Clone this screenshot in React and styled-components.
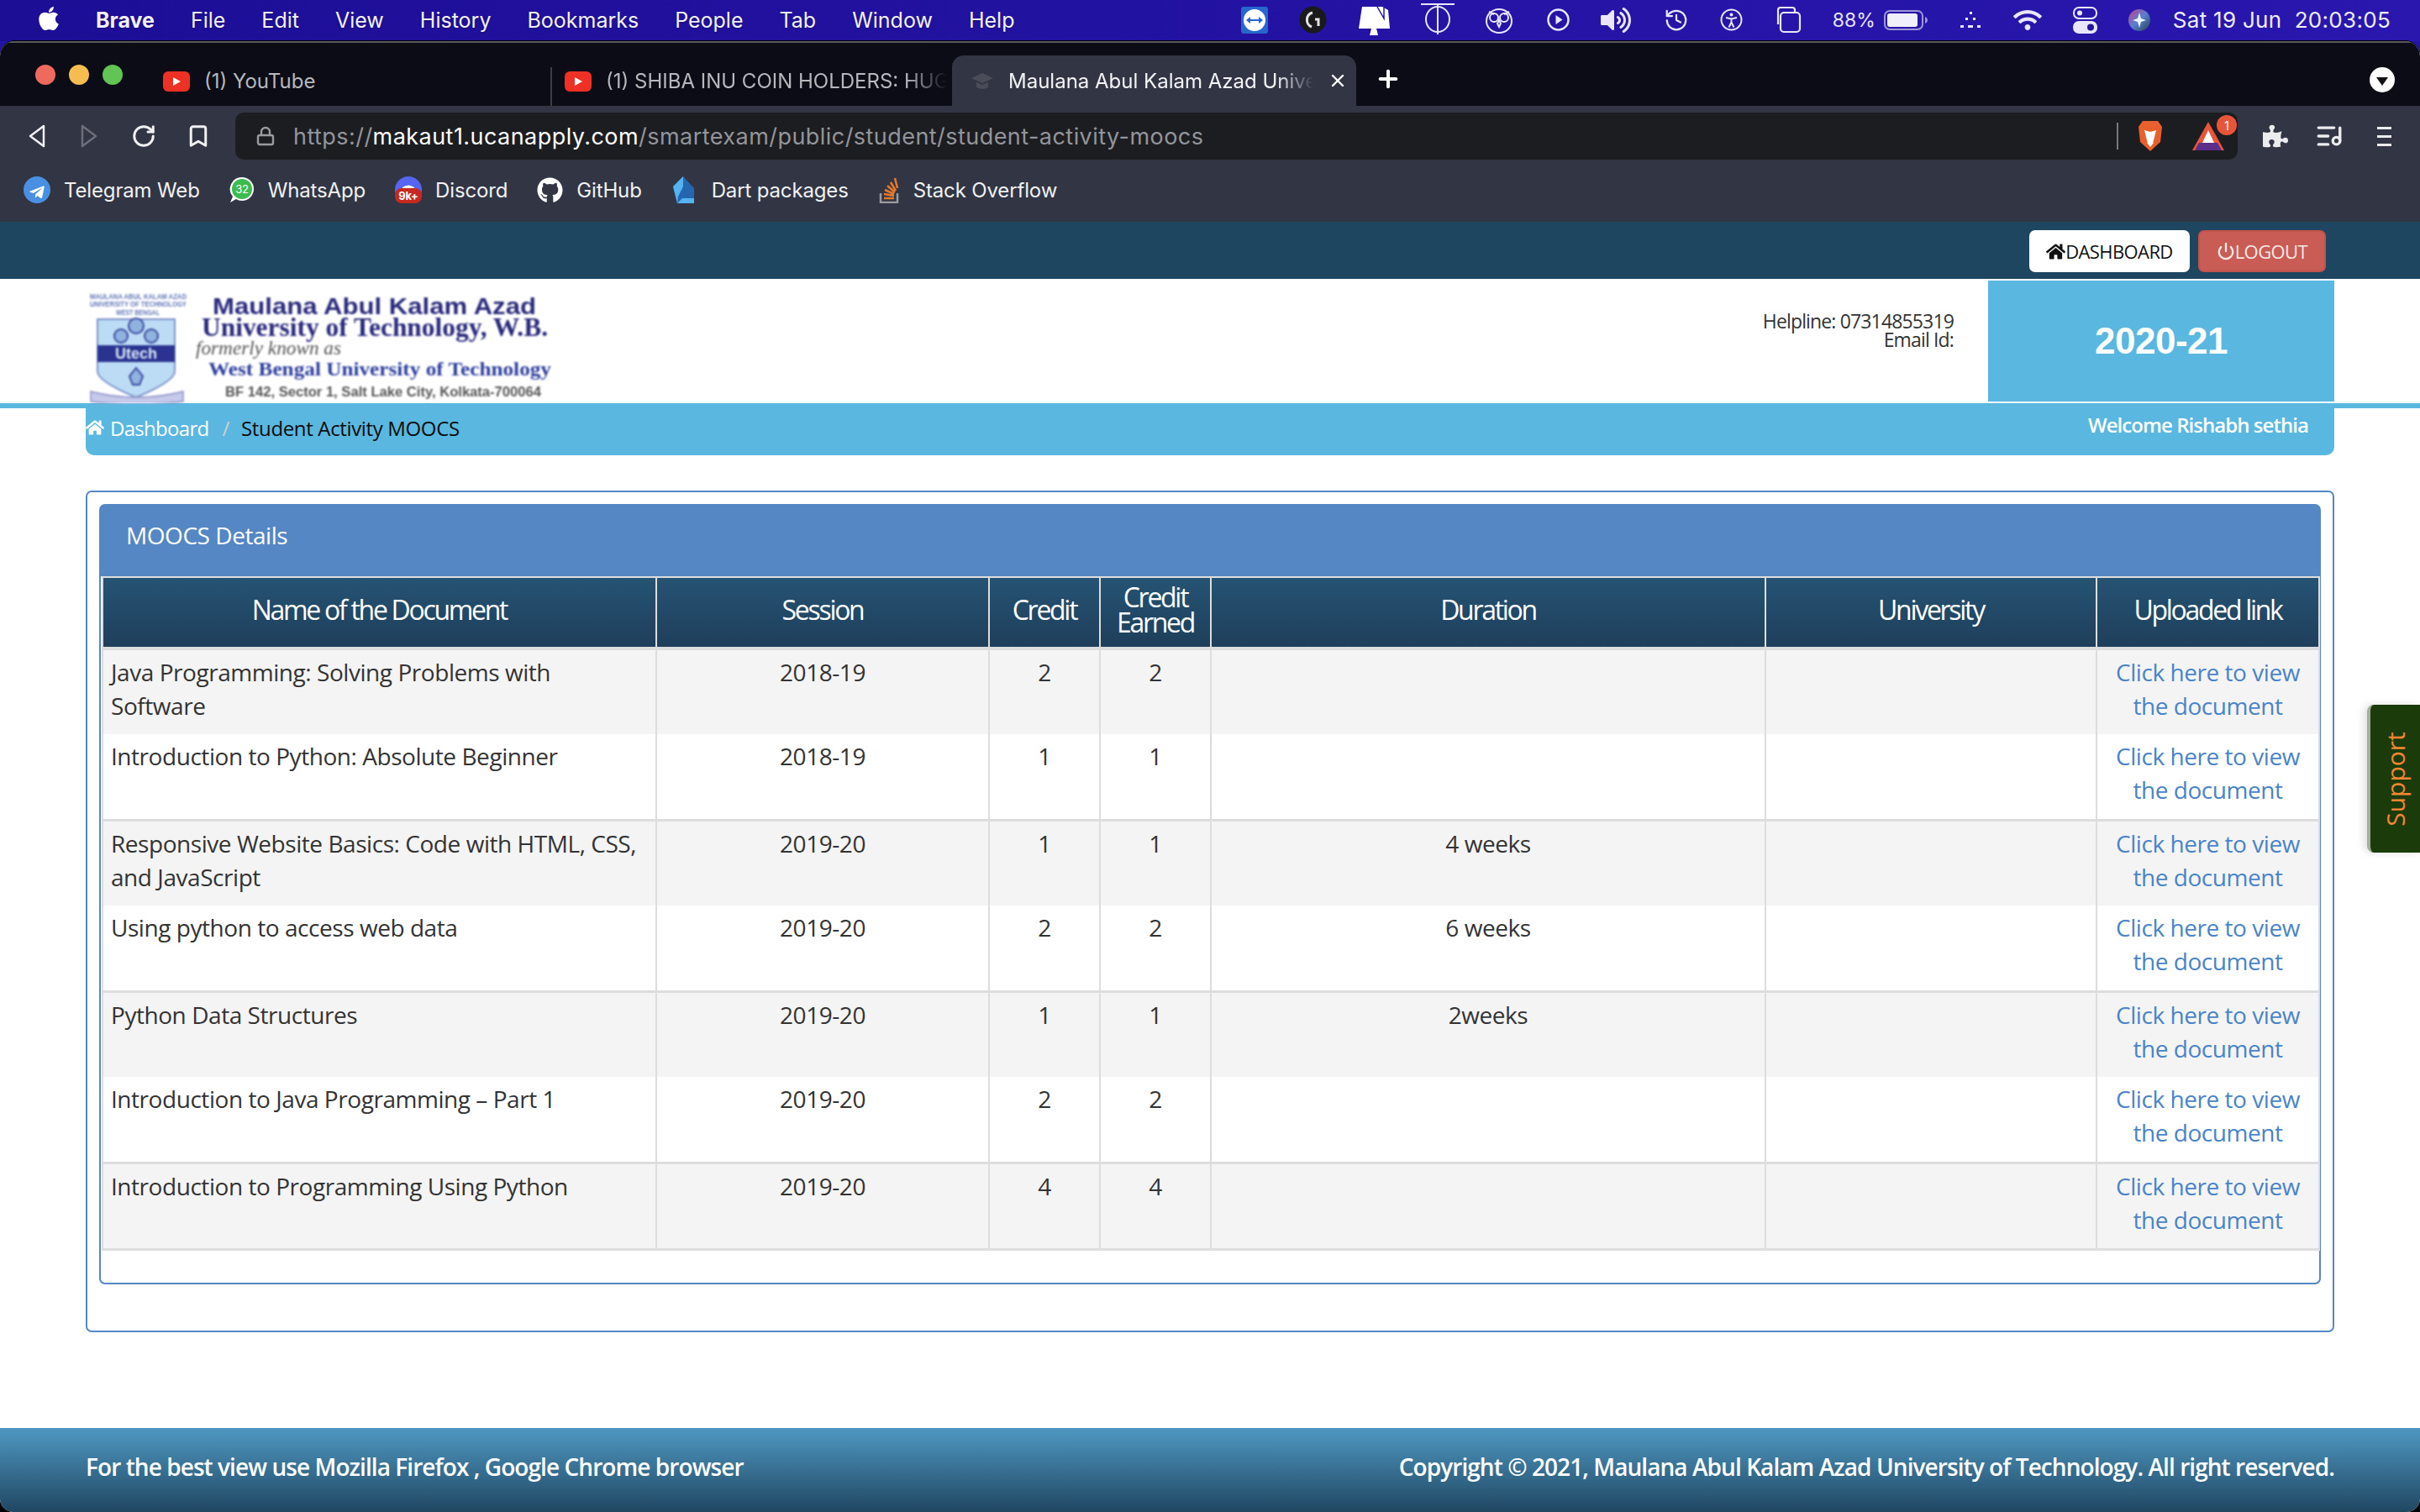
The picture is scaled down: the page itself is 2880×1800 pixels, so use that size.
import React from "react";
import styled, { createGlobalStyle } from "styled-components";
import { FaApple, FaGithub, FaTelegramPlane, FaHome, FaPuzzlePiece, FaVolumeUp, FaWifi } from "react-icons/fa";
import { Power, History, ListMusic, RotateCw, Bookmark, Plus, X, Lock } from "lucide-react";

const GlobalStyle = createGlobalStyle`
  html, body { margin: 0; padding: 0; background: #000; }
  * { box-sizing: border-box; }
  body { font-family: "Open Sans", "Liberation Sans", sans-serif; }
`;

const Screen = styled.div`
  width: 2880px;
  height: 1800px;
  overflow: hidden;
  display: flex;
  flex-direction: column;
  background: linear-gradient(#2414a6 0, #2414a6 70px, #000 70px);
`;

/* ---- mac menu bar ---- */
const MenuBar = styled.div`
  height: 49px;
  flex: none;
  display: flex;
  align-items: center;
  justify-content: space-between;
  padding: 0 35px 2px 42px;
  background: linear-gradient(90deg, #1d0e96, #2917ae);
  color: #fff;
  font-family: Inter, "Liberation Sans", sans-serif;
  font-size: 25px;
`;
const MenuLeft = styled.div`
  display: flex;
  align-items: center;
  gap: 43px;
`;
const AppleMark = styled.span`
  display: flex;
  font-size: 32px;
  margin: -4px -3px 0 0;
`;
const MenuItem = styled.span`
  font-weight: ${(p) => (p.$bold ? 700 : 400)};
  color: #f2f1fb;
  text-shadow: 0 1px 2px rgba(0, 0, 0, 0.3);
`;
const StatusIcons = styled.div`
  display: flex;
  align-items: center;
  gap: 37px;
  color: #e8e6f8;
`;
const StatusIcon = styled.svg`
  display: block;
  flex: none;
  margin-left: ${(p) => p.$shift || 0}px;
`;
const BatteryGroup = styled.div`
  display: flex;
  align-items: center;
  gap: 10px;
  font-size: 23px;
`;
const Clock = styled.span`
  font-size: 26px;
  margin-left: -10px;
  letter-spacing: 0.3px;
  color: #eeedfa;
  white-space: pre;
`;

/* ---- browser chrome ---- */
const BrowserWindow = styled.div`
  flex: 1;
  display: flex;
  flex-direction: column;
  border-radius: 18px 18px 16px 16px;
  overflow: hidden;
  background: #fff;
  box-shadow: 0 -1px 0 #000;
`;
const TabStrip = styled.div`
  height: 77px;
  flex: none;
  display: flex;
  align-items: flex-end;
  background: #0b0c15;
  border-top: 2px solid #5a5a5e;
  font-family: Inter, "Liberation Sans", sans-serif;
  font-size: 24px;
`;
const Lights = styled.div`
  width: 170px;
  height: 75px;
  flex: none;
  display: flex;
  align-items: center;
  gap: 16px;
  padding: 0 0 0 42px;
`;
const Light = styled.span`
  width: 24px;
  height: 24px;
  border-radius: 50%;
  background: ${(p) => p.$color};
`;
const Tab = styled.div`
  width: ${(p) => p.$width}px;
  height: ${(p) => (p.$active ? 60 : 46)}px;
  flex: none;
  display: flex;
  align-items: center;
  gap: 17px;
  padding: ${(p) => (p.$active ? "0 12px 0 22px" : `0 6px 13px ${p.$inset}px`)};
  color: ${(p) => (p.$active ? "#f4f4f6" : "#b7b8bd")};
  background: ${(p) => (p.$active ? "#323644" : "transparent")};
  border-radius: ${(p) => (p.$active ? "14px 14px 0 0" : "0")};
  border-right: ${(p) => (p.$divider ? "2px solid #3c3d45" : "none")};
`;
const TabTitle = styled.span`
  flex: 1;
  white-space: nowrap;
  overflow: hidden;
  -webkit-mask-image: ${(p) => (p.$fade ? "linear-gradient(90deg, #000 88%, transparent)" : "none")};
`;
const TabClose = styled.span`
  display: flex;
  color: #fff;
  margin-right: -2px;
`;
const NewTab = styled.span`
  display: flex;
  color: #fff;
  margin: 0 0 10px 22px;
  height: 44px;
  align-items: center;
`;
const TabMenu = styled.span`
  margin: 0 30px 16px auto;
  width: 30px;
  height: 30px;
  border-radius: 50%;
  background: #fff;
  display: flex;
  align-items: center;
  justify-content: center;
  &::after {
    content: "";
    margin-top: 3px;
    border-left: 7px solid transparent;
    border-right: 7px solid transparent;
    border-top: 10px solid #111;
  }
`;
const Toolbar = styled.div`
  height: 72px;
  flex: none;
  display: flex;
  align-items: center;
  padding: 8px 0 8px 0;
  background: #323644;
  font-family: Inter, "Liberation Sans", sans-serif;
`;
const NavButtons = styled.div`
  width: 280px;
  flex: none;
  display: flex;
  align-items: center;
  gap: 40px;
  padding-left: 33px;
  color: #f1f1f3;
`;
const UrlBar = styled.div`
  width: 2383px;
  height: 56px;
  flex: none;
  display: flex;
  align-items: center;
  padding: 0 16px 0 24px;
  background: #1c1d21;
  border-radius: 10px;
  font-size: 27px;
  color: #94959a;
`;
const UrlText = styled.span`
  flex: 1;
  margin-left: 21px;
  white-space: nowrap;
  letter-spacing: 0.45px;
`;
const UrlHost = styled.span`
  color: #fff;
`;
const UrlDivider = styled.span`
  width: 2px;
  height: 32px;
  background: #77787c;
  margin-right: 22px;
`;
const RewardsBadge = styled.span`
  position: relative;
  display: flex;
  margin-left: 34px;
`;
const CountBubble = styled.span`
  position: absolute;
  top: -8px;
  right: -15px;
  width: 24px;
  height: 24px;
  border-radius: 12px;
  background: #e8553a;
  color: #fff;
  font-size: 14px;
  display: flex;
  align-items: center;
  justify-content: center;
`;
const ExtensionIcons = styled.div`
  flex: 1;
  display: flex;
  align-items: center;
  gap: 32px;
  padding-left: 30px;
  color: #ececee;
`;
const KebabIcon = styled.span`
  display: flex;
  flex-direction: column;
  gap: 7px;
  margin-left: 8px;
  & > i {
    width: 17px;
    height: 3px;
    background: #ececee;
  }
`;
const BookmarkBar = styled.div`
  height: 66px;
  flex: none;
  display: flex;
  align-items: center;
  gap: 35px;
  padding: 0 0 10px 28px;
  background: #323644;
  color: #f1f1f3;
  font-family: Inter, "Liberation Sans", sans-serif;
  font-size: 24px;
  letter-spacing: -0.15px;
`;
const BookmarkItem = styled.div`
  display: flex;
  align-items: center;
  gap: 16px;
  white-space: nowrap;
`;

/* ---- site header ---- */
const TopNav = styled.div`
  height: 68px;
  flex: none;
  display: flex;
  align-items: center;
  justify-content: flex-end;
  gap: 10px;
  padding: 2px 112px 0 0;
  background: #1f4661;
`;
const NavButton = styled.div`
  height: 50px;
  display: flex;
  align-items: center;
  padding: 0 20px;
  border-radius: 7px;
  font-size: 22px;
  letter-spacing: -0.6px;
  background: ${(p) => (p.$danger ? "#c95c55" : "#fff")};
  color: ${(p) => (p.$danger ? "#f7e8e6" : "#111")};
  border: ${(p) => (p.$danger ? "2px solid #c4524c" : "none")};
`;
const BrandRow = styled.div`
  height: 148px;
  flex: none;
  display: flex;
  align-items: stretch;
  padding: 2px 102px;
  background: #fff;
`;
const LogoImage = styled.svg`
  display: block;
  margin-top: 16px;
  flex: none;
  filter: blur(0.9px);
`;
const Contact = styled.div`
  margin: 37px 41px 0 auto;
  text-align: right;
  font-size: 23px;
  line-height: 22px;
  color: #333;
  letter-spacing: -0.85px;
`;
const YearBox = styled.div`
  width: 412px;
  display: flex;
  align-items: center;
  justify-content: center;
  background: #5ab7df;
  color: #fff;
  font-family: "Liberation Sans", Arial, sans-serif;
  font-weight: 700;
  font-size: 44px;
  letter-spacing: -0.5px;
`;
const BlueRule = styled.div`
  height: 6px;
  flex: none;
  background: #5ab7df;
  box-shadow: 0 4px 6px rgba(0, 0, 0, 0.22);
`;
const Content = styled.div`
  flex: 1;
  display: flex;
  flex-direction: column;
  padding: 0 102px;
  background: #fff;
  position: relative;
`;
const BreadcrumbBar = styled.div`
  height: 56px;
  flex: none;
  display: flex;
  align-items: flex-start;
  justify-content: space-between;
  padding: 0 31px 0 0;
  margin-bottom: 42px;
  background: #5ab7df;
  border-radius: 0 0 10px 10px;
  position: relative;
  font-size: 24px;
`;
const Crumbs = styled.div`
  display: flex;
  align-items: center;
  height: 46px;
  letter-spacing: -0.35px;
`;
const CrumbLink = styled.span`
  display: flex;
  align-items: center;
  gap: 7px;
  color: #fff;
  letter-spacing: -0.7px;
`;
const CrumbSep = styled.span`
  margin: 0 14px 0 16px;
  color: #d0d0d0;
`;
const CrumbCurrent = styled.span`
  color: #0c0c0c;
`;
const Welcome = styled.div`
  height: 38px;
  display: flex;
  align-items: center;
  color: #fff;
  font-weight: 600;
  letter-spacing: -0.95px;
`;
const OuterBox = styled.div`
  height: 1002px;
  flex: none;
  padding: 14px;
  border: 2px solid #5487c4;
  border-radius: 7px;
`;
const Panel = styled.div`
  height: 929px;
  border: 2px solid #5487c4;
  border-radius: 7px;
`;
const PanelHeading = styled.div`
  height: 84px;
  padding: 15px 30px 0;
  background: #5487c4;
  color: #fff;
  font-size: 28px;
  line-height: 40px;
  letter-spacing: -0.45px;
`;
const Table = styled.table`
  width: 2638px;
  margin-left: 1px;
  border-collapse: collapse;
  table-layout: fixed;
  font-size: 28px;
  line-height: 40px;
  color: #333;
`;
const HeadCell = styled.th`
  height: 85px;
  padding: 0 6px 7px;
  font-size: 32px;
  line-height: 30px;
  font-weight: 500;
  letter-spacing: -2.3px;
  color: #fff;
  text-align: center;
  background: linear-gradient(#265373, #1e3f5b);
  border: 2px solid #ddd;
  border-bottom: 4px solid #ddd;
`;
const Row = styled.tr`
  height: 102px;
  background: ${(p) => (p.$striped ? "#f4f4f4" : "#fff")};
  border-bottom: ${(p) => (p.$striped && !p.$last ? "none" : "3px solid #ddd")};
`;
const Cell = styled.td`
  padding: 6px 9px 14px;
  vertical-align: top;
  border-left: 2px solid #ddd;
  border-right: 2px solid #ddd;
  text-align: ${(p) => (p.$left ? "left" : "center")};
  letter-spacing: -0.45px;
`;
const DocLink = styled.a`
  color: #4a84c8;
`;
const SupportTab = styled.div`
  position: absolute;
  top: 353px;
  right: 0;
  width: 63px;
  height: 176px;
  display: flex;
  align-items: center;
  justify-content: center;
  background: #1c3b0b;
  border-left: 4px solid #a3b09b;
  border-radius: 8px 0 0 8px;
  box-shadow: -4px 0 10px rgba(0, 0, 0, 0.12);
  color: #f58632;
  font-size: 30px;
  & > span {
    display: block;
    transform: rotate(-90deg);
  }
`;
const Footer = styled.div`
  height: 100px;
  flex: none;
  display: flex;
  align-items: center;
  justify-content: space-between;
  padding: 0 102px 8px;
  background: linear-gradient(#4f98c2, #204762);
  color: #fff;
  font-size: 28px;
  font-weight: 600;
  letter-spacing: -0.93px;
`;

const menuItems = ["File", "Edit", "View", "History", "Bookmarks", "People", "Tab", "Window", "Help"];

const columns = [
  { label: "Name of the Document", width: 659 },
  { label: "Session", width: 396 },
  { label: "Credit", width: 132 },
  { label: "Credit Earned", width: 132 },
  { label: "Duration", width: 660 },
  { label: "University", width: 394 },
  { label: "Uploaded link", width: 265 },
];

const documents = [
  { name: "Java Programming: Solving Problems with Software", session: "2018-19", credit: 2, duration: "" },
  { name: "Introduction to Python: Absolute Beginner", session: "2018-19", credit: 1, duration: "" },
  { name: "Responsive Website Basics: Code with HTML, CSS, and JavaScript", session: "2019-20", credit: 1, duration: "4 weeks" },
  { name: "Using python to access web data", session: "2019-20", credit: 2, duration: "6 weeks" },
  { name: "Python Data Structures", session: "2019-20", credit: 1, duration: "2weeks" },
  { name: "Introduction to Java Programming – Part 1", session: "2019-20", credit: 2, duration: "" },
  { name: "Introduction to Programming Using Python", session: "2019-20", credit: 4, duration: "" },
];

const YoutubeFavicon = () => (
  <svg width="32" height="24" viewBox="0 0 32 24" style={{ flex: "none" }}>
    <rect width="32" height="24" rx="6" fill="#ee3124" />
    <path d="M12 7l9 5-9 5z" fill="#fff" />
  </svg>
);

const StatusBar = () => (
  <StatusIcons>
    <StatusIcon width="32" height="32" viewBox="0 0 32 32">
      <rect width="32" height="32" rx="3" fill="#2766cc" />
      <circle cx="16" cy="16" r="13" fill="#fff" />
      <path d="M6 16l5-4v3h10v-3l5 4-5 4v-3H11v3z" fill="#2766cc" />
    </StatusIcon>
    <StatusIcon width="33" height="33" viewBox="0 0 33 33">
      <circle cx="16.5" cy="16.5" r="16" fill="#1a1a1c" />
      <path d="M16 8a9 9 0 0 0-1 17M19 16h4v8" fill="none" stroke="#e2e2e2" strokeWidth="3" />
    </StatusIcon>
    <StatusIcon width="38" height="36" viewBox="0 0 38 36">
      <path d="M5 2h24l7 4 2 22H1z" fill="#fff" />
      <path d="M23 2l8 14V3" fill="none" stroke="#2414a6" strokeWidth="1.5" />
      <path d="M16 28h6l2 8H14z" fill="#fff" />
    </StatusIcon>
    <StatusIcon width="40" height="38" viewBox="0 0 40 38" style={{ marginTop: -4 }}>
      <g fill="none" stroke="currentColor" strokeWidth="2">
        <path d="M0 2h40M20 2v36" />
        <ellipse cx="20" cy="20" rx="14" ry="15" />
      </g>
    </StatusIcon>
    <StatusIcon width="32" height="32" viewBox="0 0 32 32" fill="none" stroke="currentColor" strokeWidth="2">
      <ellipse cx="16" cy="17" rx="15" ry="14" />
      <circle cx="10" cy="13" r="5" />
      <circle cx="22" cy="13" r="5" />
      <path d="M16 16l-2 4 2 4 2-4zM4 6l6 3M28 6l-6 3" />
    </StatusIcon>
    <StatusIcon $shift={4} width="27" height="27" viewBox="0 0 27 27">
      <circle cx="13.5" cy="13.5" r="12" fill="none" stroke="currentColor" strokeWidth="2.5" />
      <path d="M10.5 8l8 5.5-8 5.5z" fill="currentColor" />
    </StatusIcon>
    <FaVolumeUp size={36} />
    <History size={30} strokeWidth={1.8} style={{ marginLeft: 2 }} />
    <StatusIcon width="27" height="27" viewBox="0 0 27 27" fill="none" stroke="currentColor" strokeWidth="2">
      <circle cx="13.5" cy="13.5" r="12" />
      <circle cx="13.5" cy="7.5" r="1" />
      <path d="M7 11l6.5 1.5L20 11M13.5 12.5v4l-3 6M13.5 16.5l3 6" />
    </StatusIcon>
    <StatusIcon width="33" height="33" viewBox="0 0 33 33" fill="none" stroke="currentColor" strokeWidth="2.2">
      <path d="M5 22V5a3 3 0 0 1 3-3h14a3 3 0 0 1 3 3v2" />
      <rect x="8" y="8" width="23" height="23" rx="4" />
    </StatusIcon>
    <BatteryGroup>
      <span>88%</span>
      <StatusIcon width="52" height="24" viewBox="0 0 52 24">
        <rect x="1" y="1" width="45" height="22" rx="6" fill="none" stroke="#9d97d9" strokeWidth="2" />
        <rect x="4" y="4" width="36" height="16" rx="3" fill="#f0effa" />
        <path d="M49 8c2 1 3 2.5 3 4s-1 3-3 4z" fill="#9d97d9" />
      </StatusIcon>
    </BatteryGroup>
    <StatusIcon width="28" height="20" viewBox="0 0 28 20" fill="currentColor">
      <rect x="13" y="0" width="3" height="3" />
      <rect x="8" y="7" width="3" height="3" />
      <rect x="17" y="7" width="3" height="3" />
      <rect x="2" y="16" width="4" height="3" />
      <rect x="11" y="16" width="6" height="3" />
      <rect x="22" y="16" width="4" height="3" />
    </StatusIcon>
    <FaWifi size={34} />
    <StatusIcon width="29" height="32" viewBox="0 0 29 32">
      <rect x="1" y="1" width="27" height="13" rx="6" fill="none" stroke="currentColor" strokeWidth="2" />
      <circle cx="8" cy="7.5" r="3" fill="currentColor" />
      <rect y="17" width="29" height="15" rx="7" fill="currentColor" />
      <circle cx="21" cy="24.5" r="4" fill="#2414a6" />
    </StatusIcon>
    <StatusIcon width="26" height="26" viewBox="0 0 26 26">
      <defs>
        <linearGradient id="siri" x1="0" y1="0" x2="1" y2="1">
          <stop offset="0" stopColor="#c0408c" />
          <stop offset="0.5" stopColor="#5a7fd0" />
          <stop offset="1" stopColor="#23404a" />
        </linearGradient>
      </defs>
      <circle cx="13" cy="13" r="13" fill="url(#siri)" />
      <path d="M13 4l2 7 6 2-6 2-2 7-2-7-6-2 6-2z" fill="#e8f6ff" />
    </StatusIcon>
    <Clock>{"Sat 19 Jun  20:03:05"}</Clock>
  </StatusIcons>
);

const Logo = () => (
  <LogoImage width="570" height="130" viewBox="0 0 570 130">
    <g fontFamily="Liberation Sans, sans-serif" fontSize="9" fontWeight="700" fill="#6377b8">
      <text x="5" y="6" textLength="115" lengthAdjust="spacingAndGlyphs">MAULANA ABUL KALAM AZAD</text>
      <text x="5" y="15" textLength="115" lengthAdjust="spacingAndGlyphs">UNIVERSITY OF TECHNOLOGY</text>
      <text x="36" y="25" textLength="52" lengthAdjust="spacingAndGlyphs">WEST BENGAL</text>
    </g>
    <path d="M14 30h92v62q0 12-46 31q-46-19-46-31z" fill="#bcdcf5" stroke="#7f92cc" strokeWidth="2" />
    <rect x="14" y="61" width="92" height="20" fill="#2a3490" />
    <text x="60" y="77" textAnchor="middle" fontFamily="Liberation Sans, sans-serif" fontSize="18" fontWeight="700" fill="#d8e6f8">Utech</text>
    <g fill="#8fb2de" stroke="#3a4aa0" strokeWidth="2">
      <circle cx="60" cy="38" r="9" />
      <circle cx="42" cy="50" r="8" />
      <circle cx="78" cy="50" r="8" />
    </g>
    <path d="M60 88l8 10-4 10h-8l-4-10z" fill="#8fb2de" stroke="#3a4aa0" strokeWidth="2" />
    <path d="M6 116q54 14 110 0v12q-56 6-110 0z" fill="#c6c9ea" stroke="#8d92c8" strokeWidth="1.5" />
    <g fontFamily="Liberation Serif, serif" fontWeight="700" fontSize="31" fill="#2a2a7c">
      <text x="151" y="24" textLength="385" lengthAdjust="spacingAndGlyphs" fontFamily="Liberation Sans, sans-serif" fontSize="27">Maulana Abul Kalam Azad</text>
      <text x="138" y="50" textLength="412" lengthAdjust="spacingAndGlyphs">University of Technology, W.B.</text>
    </g>
    <text x="131" y="72" textLength="173" lengthAdjust="spacingAndGlyphs" fontFamily="Liberation Serif, serif" fontStyle="italic" fontSize="24" fill="#555">formerly known as</text>
    <text x="146" y="97" textLength="408" lengthAdjust="spacingAndGlyphs" fontFamily="Liberation Serif, serif" fontWeight="700" fontSize="24" fill="#2e3f9c">West Bengal University of Technology</text>
    <text x="166" y="122" textLength="376" lengthAdjust="spacingAndGlyphs" fontFamily="Liberation Sans, sans-serif" fontWeight="700" fontSize="16" fill="#555">BF 142, Sector 1, Salt Lake City, Kolkata-700064</text>
  </LogoImage>
);

export default function App() {
  return (
    <Screen>
      <GlobalStyle />
      <MenuBar>
        <MenuLeft>
          <AppleMark><FaApple /></AppleMark>
          <MenuItem $bold>Brave</MenuItem>
          {menuItems.map((item) => <MenuItem key={item}>{item}</MenuItem>)}
        </MenuLeft>
        <StatusBar />
      </MenuBar>

      <BrowserWindow>
        <TabStrip>
          <Lights>
            <Light $color="#ee6a5f" />
            <Light $color="#f5bd4f" />
            <Light $color="#61c454" />
          </Lights>
          <Tab $width={487} $inset={24} $divider>
            <YoutubeFavicon />
            <TabTitle>(1) YouTube</TabTitle>
          </Tab>
          <Tab $width={476} $inset={15}>
            <YoutubeFavicon />
            <TabTitle $fade>(1) SHIBA INU COIN HOLDERS: HUGE NEWS</TabTitle>
          </Tab>
          <Tab $width={481} $active>
            <svg width="28" height="28" viewBox="0 0 28 28" style={{ flex: "none" }} fill="#4a4d57">
              <path d="M14 5L1 11l13 6 13-6zM7 16v6q7 4 14 0v-6l-7 3z" />
            </svg>
            <TabTitle $fade>Maulana Abul Kalam Azad University</TabTitle>
            <TabClose><X size={24} strokeWidth={2.4} /></TabClose>
          </Tab>
          <NewTab><Plus size={32} strokeWidth={3} /></NewTab>
          <TabMenu />
        </TabStrip>

        <Toolbar>
          <NavButtons>
            <svg width="22" height="28" viewBox="0 0 22 28" fill="none" stroke="#f1f1f3" strokeWidth="2.5" strokeLinejoin="round">
              <path d="M19 2L3 14l16 12z" />
            </svg>
            <svg width="22" height="28" viewBox="0 0 22 28" fill="none" stroke="#6d6f78" strokeWidth="2.5" strokeLinejoin="round">
              <path d="M3 2l16 12L3 26z" />
            </svg>
            <RotateCw size={30} strokeWidth={2.4} style={{ marginLeft: -1 }} />
            <Bookmark size={30} strokeWidth={2.4} style={{ marginLeft: -5 }} />
          </NavButtons>
          <UrlBar>
            <Lock size={24} strokeWidth={2.4} color="#9a9ba0" />
            <UrlText>https://<UrlHost>makaut1.ucanapply.com</UrlHost>/smartexam/public/student/student-activity-moocs</UrlText>
            <UrlDivider />
            <svg width="32" height="38" viewBox="0 0 32 38">
              <path d="M7 1h18l5 7-2 18-12 11L4 26 2 8z" fill="#e8602c" />
              <path d="M9 12l7 2 7-2-2 8-2 8h-6l-2-8z" fill="#fff" />
              <path d="M12 27h8l-4 5z" fill="#fff" />
            </svg>
            <RewardsBadge>
              <svg width="38" height="34" viewBox="0 0 38 34">
                <path d="M19 0L38 34H0z" fill="#e8553a" />
                <path d="M19 10l7 15H12z" fill="#fff" />
                <path d="M8 25h22l5 9H3z" fill="#5b2f8a" />
              </svg>
              <CountBubble>1</CountBubble>
            </RewardsBadge>
          </UrlBar>
          <ExtensionIcons>
            <FaPuzzlePiece size={30} />
            <ListMusic size={34} strokeWidth={2.4} />
            <KebabIcon><i /><i /><i /></KebabIcon>
          </ExtensionIcons>
        </Toolbar>

        <BookmarkBar>
          <BookmarkItem>
            <svg width="32" height="32" viewBox="0 0 32 32">
              <circle cx="16" cy="16" r="16" fill="#4a90e2" />
              <foreignObject x="6" y="6" width="20" height="20"><FaTelegramPlane size={20} color="#fff" /></foreignObject>
            </svg>
            Telegram Web
          </BookmarkItem>
          <BookmarkItem>
            <svg width="30" height="32" viewBox="0 0 30 32">
              <path d="M15 1a14 14 0 0 1 0 28c-3 0-5-1-7-2l-7 4 3-7A14 14 0 0 1 15 1z" fill="#fff" />
              <circle cx="15" cy="15" r="12" fill="#3dbb4f" />
              <text x="15" y="20" textAnchor="middle" fontFamily="Inter, sans-serif" fontSize="13" fill="#fff">32</text>
            </svg>
            WhatsApp
          </BookmarkItem>
          <BookmarkItem>
            <svg width="32" height="32" viewBox="0 0 32 32">
              <circle cx="16" cy="16" r="16" fill="#5865f2" />
              <path d="M9 13q7-5 14 0v3H9z" fill="#fff" />
              <rect y="14" width="32" height="18" rx="8" fill="#c7281f" />
              <text x="16" y="28" textAnchor="middle" fontFamily="Inter, sans-serif" fontSize="13" fontWeight="700" fill="#fff">9k+</text>
            </svg>
            Discord
          </BookmarkItem>
          <BookmarkItem>
            <FaGithub size={31} color="#fff" />
            GitHub
          </BookmarkItem>
          <BookmarkItem>
            <svg width="32" height="32" viewBox="0 0 32 32">
              <path d="M14 0L2 12l5 20h20V14z" fill="#2467b0" />
              <path d="M2 12L14 0v12L8 24l-1 8z" fill="#55b4f0" />
              <path d="M7 32l6-6h14v6z" fill="#55b4f0" />
            </svg>
            Dart packages
          </BookmarkItem>
          <BookmarkItem>
            <svg width="26" height="32" viewBox="0 0 26 32">
              <path d="M3 20v11h20V20" fill="none" stroke="#9a9aa0" strokeWidth="2.5" />
              <path d="M7 26h12M7 21l12 2M8 16l11 5M11 11l9 8M15 7l6 10M20 2l3 12" fill="none" stroke="#e6792b" strokeWidth="2.5" />
            </svg>
            Stack Overflow
          </BookmarkItem>
        </BookmarkBar>

        <TopNav>
          <NavButton><FaHome size={23} />DASHBOARD</NavButton>
          <NavButton $danger><Power size={22} strokeWidth={2.6} />LOGOUT</NavButton>
        </TopNav>

        <BrandRow>
          <Logo />
          <Contact>
            Helpline: 07314855319<br />
            Email Id:
          </Contact>
          <YearBox>2020-21</YearBox>
        </BrandRow>
        <BlueRule />

        <Content>
          <BreadcrumbBar>
            <Crumbs>
              <CrumbLink><FaHome size={22} />Dashboard</CrumbLink>
              <CrumbSep>/</CrumbSep>
              <CrumbCurrent>Student Activity MOOCS</CrumbCurrent>
            </Crumbs>
            <Welcome>Welcome Rishabh sethia</Welcome>
          </BreadcrumbBar>

          <OuterBox>
            <Panel>
              <PanelHeading>MOOCS Details</PanelHeading>
              <Table>
                <colgroup>
                  {columns.map((c) => <col key={c.label} width={c.width} />)}
                </colgroup>
                <thead>
                  <tr>
                    {columns.map((c) => <HeadCell key={c.label}>{c.label}</HeadCell>)}
                  </tr>
                </thead>
                <tbody>
                  {documents.map((doc, i) => (
                    <Row key={doc.name} $striped={i % 2 === 0} $last={i === documents.length - 1}>
                      <Cell $left>{doc.name}</Cell>
                      <Cell>{doc.session}</Cell>
                      <Cell>{doc.credit}</Cell>
                      <Cell>{doc.credit}</Cell>
                      <Cell>{doc.duration}</Cell>
                      <Cell />
                      <Cell><DocLink>Click here to view the document</DocLink></Cell>
                    </Row>
                  ))}
                </tbody>
              </Table>
            </Panel>
          </OuterBox>
          <SupportTab><span>Support</span></SupportTab>
        </Content>

        <Footer>
          <span>For the best view use Mozilla Firefox , Google Chrome browser</span>
          <span>Copyright © 2021, Maulana Abul Kalam Azad University of Technology. All right reserved.</span>
        </Footer>
      </BrowserWindow>
    </Screen>
  );
}
